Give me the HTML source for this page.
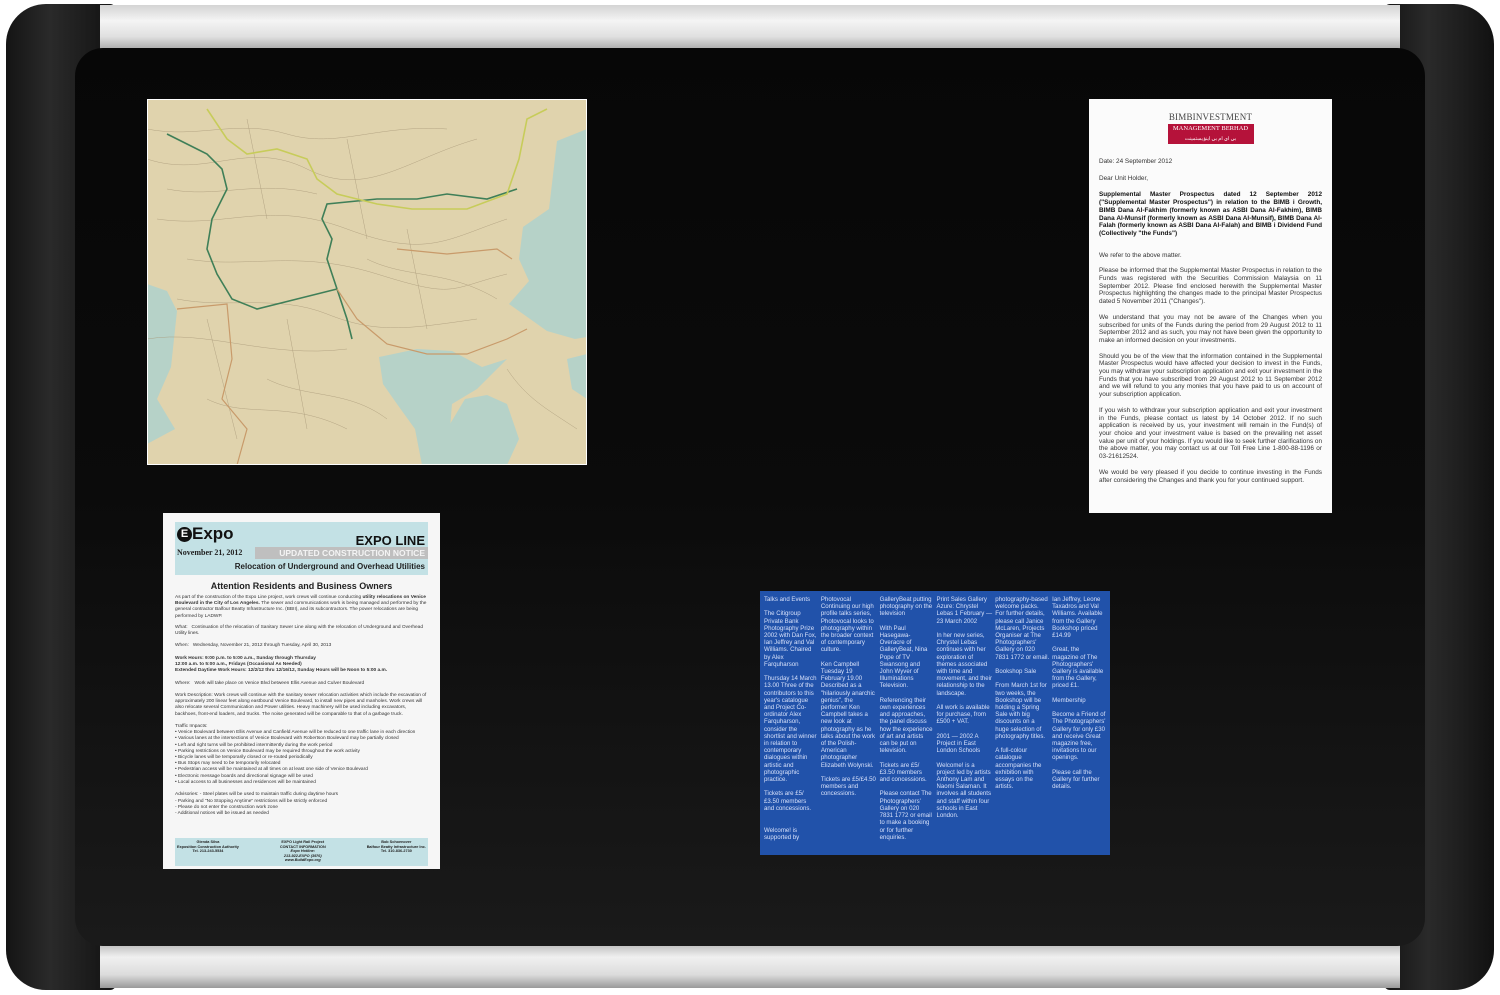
<!DOCTYPE html>
<html><head><meta charset="utf-8"><style>
*{margin:0;padding:0;box-sizing:border-box}
body{width:1500px;height:995px;background:#fff;position:relative;overflow:hidden;font-family:"Liberation Sans",sans-serif}
.abs{position:absolute}
.side{position:absolute;background:linear-gradient(90deg,#141414,#2a2a2a 40%,#1e1e1e 70%,#111)}
.bar{position:absolute;left:100px;width:1300px;background:linear-gradient(180deg,#d4d4d4,#f4f4f4 35%,#e0e0e0 70%,#a8a8a8)}
.board{position:absolute;left:75px;top:48px;width:1350px;height:898px;background:linear-gradient(180deg,#070707,#0b0b0b 50%,#1a1a1a);border-radius:28px}
.t{font-size:6.4px;line-height:7.7px;color:#333}
.e{font-size:4.8px;line-height:6.2px;color:#333}
.w{color:#d6e0fa;font-size:6.1px;line-height:7.2px}
</style></head><body>
<div class="side" style="left:6px;top:4px;width:110px;height:986px;border-radius:40px 6px 6px 40px"></div>
<div class="side" style="left:1384px;top:4px;width:110px;height:986px;border-radius:6px 40px 40px 6px"></div>
<div class="bar" style="top:5px;height:45px"></div>
<div class="bar" style="top:944px;height:44px;background:linear-gradient(180deg,#bdbdbd,#f0f0f0 30%,#dcdcdc 70%,#9a9a9a)"></div>
<div class="board"></div>

<svg class="abs" style="left:147px;top:99px" width="440" height="366" viewBox="0 0 440 366">
<rect width="440" height="366" fill="#e0d3ad"/>
<g fill="#b6d2c8">
<polygon points="440,30 410,42 402,110 376,128 372,160 382,182 362,205 400,232 428,240 440,238"/>
<polygon points="232,258 270,250 305,252 335,268 360,260 330,290 305,305 300,366 275,366 268,330 250,305 236,285"/>
<polygon points="0,185 20,192 30,212 24,268 10,300 28,330 0,345"/>
<polygon points="300,330 318,300 340,296 360,305 372,340 360,366 300,366"/>
<polygon points="420,260 440,255 440,300 425,290"/>
</g>
<g stroke="#a89878" stroke-width="0.5" fill="none" opacity=".8">
<path d="M0,60 C60,80 100,40 160,70 S260,60 330,40"/>
<path d="M10,120 C80,130 120,100 200,130 S300,140 360,120"/>
<path d="M0,240 C60,230 120,260 200,250"/>
<path d="M120,280 C160,300 200,290 240,320"/>
<path d="M220,160 C260,180 300,170 350,200"/>
<path d="M0,30 C50,40 90,20 140,35 S230,25 300,30"/>
<path d="M20,90 C70,100 110,80 170,95"/>
<path d="M40,160 C100,170 150,150 230,175 S300,190 360,175"/>
<path d="M30,200 C80,210 130,195 180,215 S260,230 330,220"/>
<path d="M60,300 C100,320 140,300 200,330"/>
<path d="M360,270 C380,300 400,310 430,330"/>
<path d="M100,20 L120,120 M200,40 L220,140 M260,130 L280,230 M60,220 L90,340 M140,220 L160,330"/>
</g>
<g fill="none" stroke="#3f7f58" stroke-width="1.6">
<path d="M20,35 L40,45 L60,55 L75,70 L80,90 L65,120 L60,150 L70,175 L85,200 L110,210 L150,200 L190,190"/>
<path d="M190,190 L180,160 L185,140 L175,120 L180,105 L230,100 L270,100 L300,95 L340,100 L370,90"/>
<path d="M190,190 L200,220 L205,240"/>
</g>
<g fill="none" stroke="#c7cc5a" stroke-width="1.6">
<path d="M60,10 L80,40 L100,55 L130,50 L160,60 L170,80 L190,95 L230,105 L265,110 L320,110 L360,95 L372,60 L380,20 L400,10"/>
</g>
<g fill="none" stroke="#c89a6a" stroke-width="1.2">
<path d="M190,190 L210,220 L240,245 L280,255 L320,255 L360,240 L380,230"/>
<path d="M30,210 L80,205 L85,260 L75,300 L100,330 L90,366"/>
<path d="M250,150 L300,155 L350,150 L365,160"/>
</g>
<rect x="0" y="0" width="440" height="366" fill="none" stroke="#fff" stroke-width="2"/>
</svg>

<div class="abs" style="left:1089px;top:99px;width:243px;height:414px;background:#fbfbfb;padding:0 10px">
<div style="text-align:center;font-family:'Liberation Serif',serif;font-size:9px;color:#444;margin-top:13px;letter-spacing:.2px">BIMB&#8203;INVESTMENT</div>
<div style="margin:2px auto 0;width:86px;height:20px;background:#b5123a;color:#fff;font-family:'Liberation Serif',serif;font-size:6.5px;text-align:center;line-height:10px">MANAGEMENT BERHAD<br><span style="font-size:5px">بي اي ام بي اينۏيستمينت</span></div>
<div class="t" style="margin-top:14px">Date: 24 September 2012</div>
<div class="t" style="margin-top:9px">Dear Unit Holder,</div>
<div class="t" style="margin-top:9px;font-weight:bold;color:#111;text-align:justify">Supplemental Master Prospectus dated 12 September 2012 ("Supplemental Master Prospectus") in relation to the BIMB i Growth, BIMB Dana Al-Fakhim (formerly known as ASBI Dana Al-Fakhim), BIMB Dana Al-Munsif (formerly known as ASBI Dana Al-Munsif), BIMB Dana Al-Falah (formerly known as ASBI Dana Al-Falah) and BIMB i Dividend Fund (Collectively "the Funds")</div>
<div class="t" style="margin-top:14px">We refer to the above matter.</div>
<div class="t" style="margin-top:8px;text-align:justify">Please be informed that the Supplemental Master Prospectus in relation to the Funds was registered with the Securities Commission Malaysia on 11 September 2012. Please find enclosed herewith the Supplemental Master Prospectus highlighting the changes made to the principal Master Prospectus dated 5 November 2011 ("Changes").</div>
<div class="t" style="margin-top:8px;text-align:justify">We understand that you may not be aware of the Changes when you subscribed for units of the Funds during the period from 29 August 2012 to 11 September 2012 and as such, you may not have been given the opportunity to make an informed decision on your investments.</div>
<div class="t" style="margin-top:8px;text-align:justify">Should you be of the view that the information contained in the Supplemental Master Prospectus would have affected your decision to invest in the Funds, you may withdraw your subscription application and exit your investment in the Funds that you have subscribed from 29 August 2012 to 11 September 2012 and we will refund to you any monies that you have paid to us on account of your subscription application.</div>
<div class="t" style="margin-top:8px;text-align:justify">If you wish to withdraw your subscription application and exit your investment in the Funds, please contact us latest by 14 October 2012. If no such application is received by us, your investment will remain in the Fund(s) of your choice and your investment value is based on the prevailing net asset value per unit of your holdings. If you would like to seek further clarifications on the above matter, you may contact us at our Toll Free Line 1-800-88-1196 or 03-21612524.</div>
<div class="t" style="margin-top:8px;text-align:justify">We would be very pleased if you decide to continue investing in the Funds after considering the Changes and thank you for your continued support.</div>
</div>

<div class="abs" style="left:163px;top:513px;width:277px;height:356px;background:#f6f6f6;padding:0 12px">
<div style="margin-top:9px;height:53px;background:#c3e1e5;position:relative">
<div class="abs" style="left:2px;top:2px;font-size:17px;font-weight:bold;color:#111"><span style="display:inline-block;width:15px;height:15px;border-radius:50%;background:#111;color:#fff;font-size:11px;text-align:center;line-height:15px;vertical-align:2px">E</span>Expo</div>
<div class="abs" style="right:3px;top:11px;font-size:13px;font-weight:bold;color:#111">EXPO LINE</div>
<div class="abs" style="left:0;top:25px;width:100%;height:12px;background:#bfbfbf"></div>
<div class="abs" style="left:0;top:25px;width:80px;height:12px;background:#c3e1e5;font-family:'Liberation Serif',serif;font-weight:bold;font-size:8px;line-height:12px;padding-left:2px;color:#222">November 21, 2012</div>
<div class="abs" style="right:3px;top:26px;font-size:8.5px;font-weight:bold;color:#f4f4f4">UPDATED CONSTRUCTION NOTICE</div>
<div class="abs" style="right:3px;top:40px;font-size:8px;font-weight:bold;color:#222">Relocation of Underground and Overhead Utilities</div>
</div>
<div style="text-align:center;font-weight:bold;font-size:9px;margin-top:6px;color:#222">Attention Residents and Business Owners</div>
<div class="e" style="margin-top:4px">As part of the construction of the Expo Line project, work crews will continue conducting <b>utility relocations on Venice Boulevard in the City of Los Angeles.</b> The sewer and communications work is being managed and performed by the general contractor Balfour Beatty Infrastructure Inc. (BBII), and its subcontractors. The power relocations are being performed by LADWP.</div>
<div class="e" style="margin-top:5px">What: &nbsp; Continuation of the relocation of Sanitary Sewer Line along with the relocation of Underground and Overhead Utility lines.<br><br>When: &nbsp; Wednesday, November 21, 2012 through Tuesday, April 30, 2013<br><br><b>Work Hours: 9:00 p.m. to 5:00 a.m., Sunday through Thursday<br>12:00 a.m. to 5:00 a.m., Fridays (Occasional As Needed)<br>Extended Daytime Work Hours: 12/2/12 thru 12/16/12, Sunday Hours will be Noon to 5:00 a.m.</b><br><br>Where: &nbsp; Work will take place on Venice Blvd between Ellis Avenue and Culver Boulevard<br><br>Work Description: Work crews will continue with the sanitary sewer relocation activities which include the excavation of approximately 200 linear feet along eastbound Venice Boulevard, to install new pipes and manholes. Work crews will also relocate several Communication and Power utilities. Heavy machinery will be used including excavators, backhoes, front-end loaders, and trucks. The noise generated will be comparable to that of a garbage truck.<br><br>Traffic Impacts:<br>• Venice Boulevard between Ellis Avenue and Canfield Avenue will be reduced to one traffic lane in each direction<br>• Various lanes at the intersections of Venice Boulevard with Robertson Boulevard may be partially closed<br>• Left and right turns will be prohibited intermittently during the work period<br>• Parking restrictions on Venice Boulevard may be required throughout the work activity<br>• Bicycle lanes will be temporarily closed or re-routed periodically<br>• Bus Stops may need to be temporarily relocated<br>• Pedestrian access will be maintained at all times on at least one side of Venice Boulevard<br>• Electronic message boards and directional signage will be used<br>• Local access to all businesses and residences will be maintained<br><br>Advisories: - Steel plates will be used to maintain traffic during daytime hours<br>- Parking and "No Stopping Anytime" restrictions will be strictly enforced<br>- Please do not enter the construction work zone<br>- Additional notices will be issued as needed</div>
<div class="abs" style="left:12px;top:325px;width:253px;height:28px;background:#c3e1e5;font-size:3.8px;line-height:4.6px;color:#222;font-weight:bold;display:flex;justify-content:space-between;text-align:center;padding:2px">
<div>Glenda Silva<br>Exposition Construction Authority<br>Tel. 213-243-5534</div>
<div>EXPO Light Rail Project<br>CONTACT INFORMATION<br><i>Expo Hotline:<br>213-922-EXPO (3976)<br>www.BuildExpo.org</i></div>
<div>Bob Schoenover<br>Balfour Beatty Infrastructure Inc.<br>Tel. 310-836-2730</div>
</div>
</div>

<div class="abs" style="left:760px;top:591px;width:350px;height:264px;background:#2152aa;display:flex;padding:5px 4px;gap:3px;overflow:hidden">
<div class="w" style="width:56px">Talks and Events<br><br>The Citigroup Private Bank Photography Prize 2002 with Dan Fox, Ian Jeffrey and Val Williams. Chaired by Alex Farquharson<br><br>Thursday 14 March 13.00 Three of the contributors to this year's catalogue and Project Co-ordinator Alex Farquharson, consider the shortlist and winner in relation to contemporary dialogues within artistic and photographic practice.<br><br>Tickets are £5/£3.50 members and concessions.<br><br><br>Welcome! is supported by</div>
<div class="w" style="width:58px">Photovocal Continuing our high profile talks series, Photovocal looks to photography within the broader context of contemporary culture.<br><br>Ken Campbell Tuesday 19 February 19.00 Described as a "hilariously anarchic genius", the performer Ken Campbell takes a new look at photography as he talks about the work of the Polish-American photographer Elizabeth Wolynski.<br><br>Tickets are £5/£4.50 members and concessions.</div>
<div class="w" style="width:56px">GalleryBeat putting photography on the television<br><br>With Paul Hasegawa-Overacre of GalleryBeat, Nina Pope of TV Swansong and John Wyver of Illuminations Television.<br><br>Referencing their own experiences and approaches, the panel discuss how the experience of art and artists can be put on television.<br><br>Tickets are £5/£3.50 members and concessions.<br><br>Please contact The Photographers' Gallery on 020 7831 1772 or email to make a booking or for further enquiries.</div>
<div class="w" style="width:58px">Print Sales Gallery Azure: Chrystel Lebas 1 February — 23 March 2002<br><br>In her new series, Chrystel Lebas continues with her exploration of themes associated with time and movement, and their relationship to the landscape.<br><br>All work is available for purchase, from £500 + VAT.<br><br>2001 — 2002 A Project in East London Schools<br><br>Welcome! is a project led by artists Anthony Lam and Naomi Salaman. It involves all students and staff within four schools in East London.</div>
<div class="w" style="width:56px">photography-based welcome packs. For further details, please call Janice McLaren, Projects Organiser at The Photographers' Gallery on 020 7831 1772 or email.<br><br>Bookshop Sale<br><br>From March 1st for two weeks, the Bookshop will be holding a Spring Sale with big discounts on a huge selection of photography titles.<br><br>A full-colour catalogue accompanies the exhibition with essays on the artists.</div>
<div class="w" style="width:56px">Ian Jeffrey, Leone Taxadros and Val Williams. Available from the Gallery Bookshop priced £14.99<br><br>Great, the magazine of The Photographers' Gallery is available from the Gallery, priced £1.<br><br>Membership<br><br>Become a Friend of The Photographers' Gallery for only £30 and receive Great magazine free, invitations to our openings.<br><br>Please call the Gallery for further details.</div>
</div>
</body></html>
